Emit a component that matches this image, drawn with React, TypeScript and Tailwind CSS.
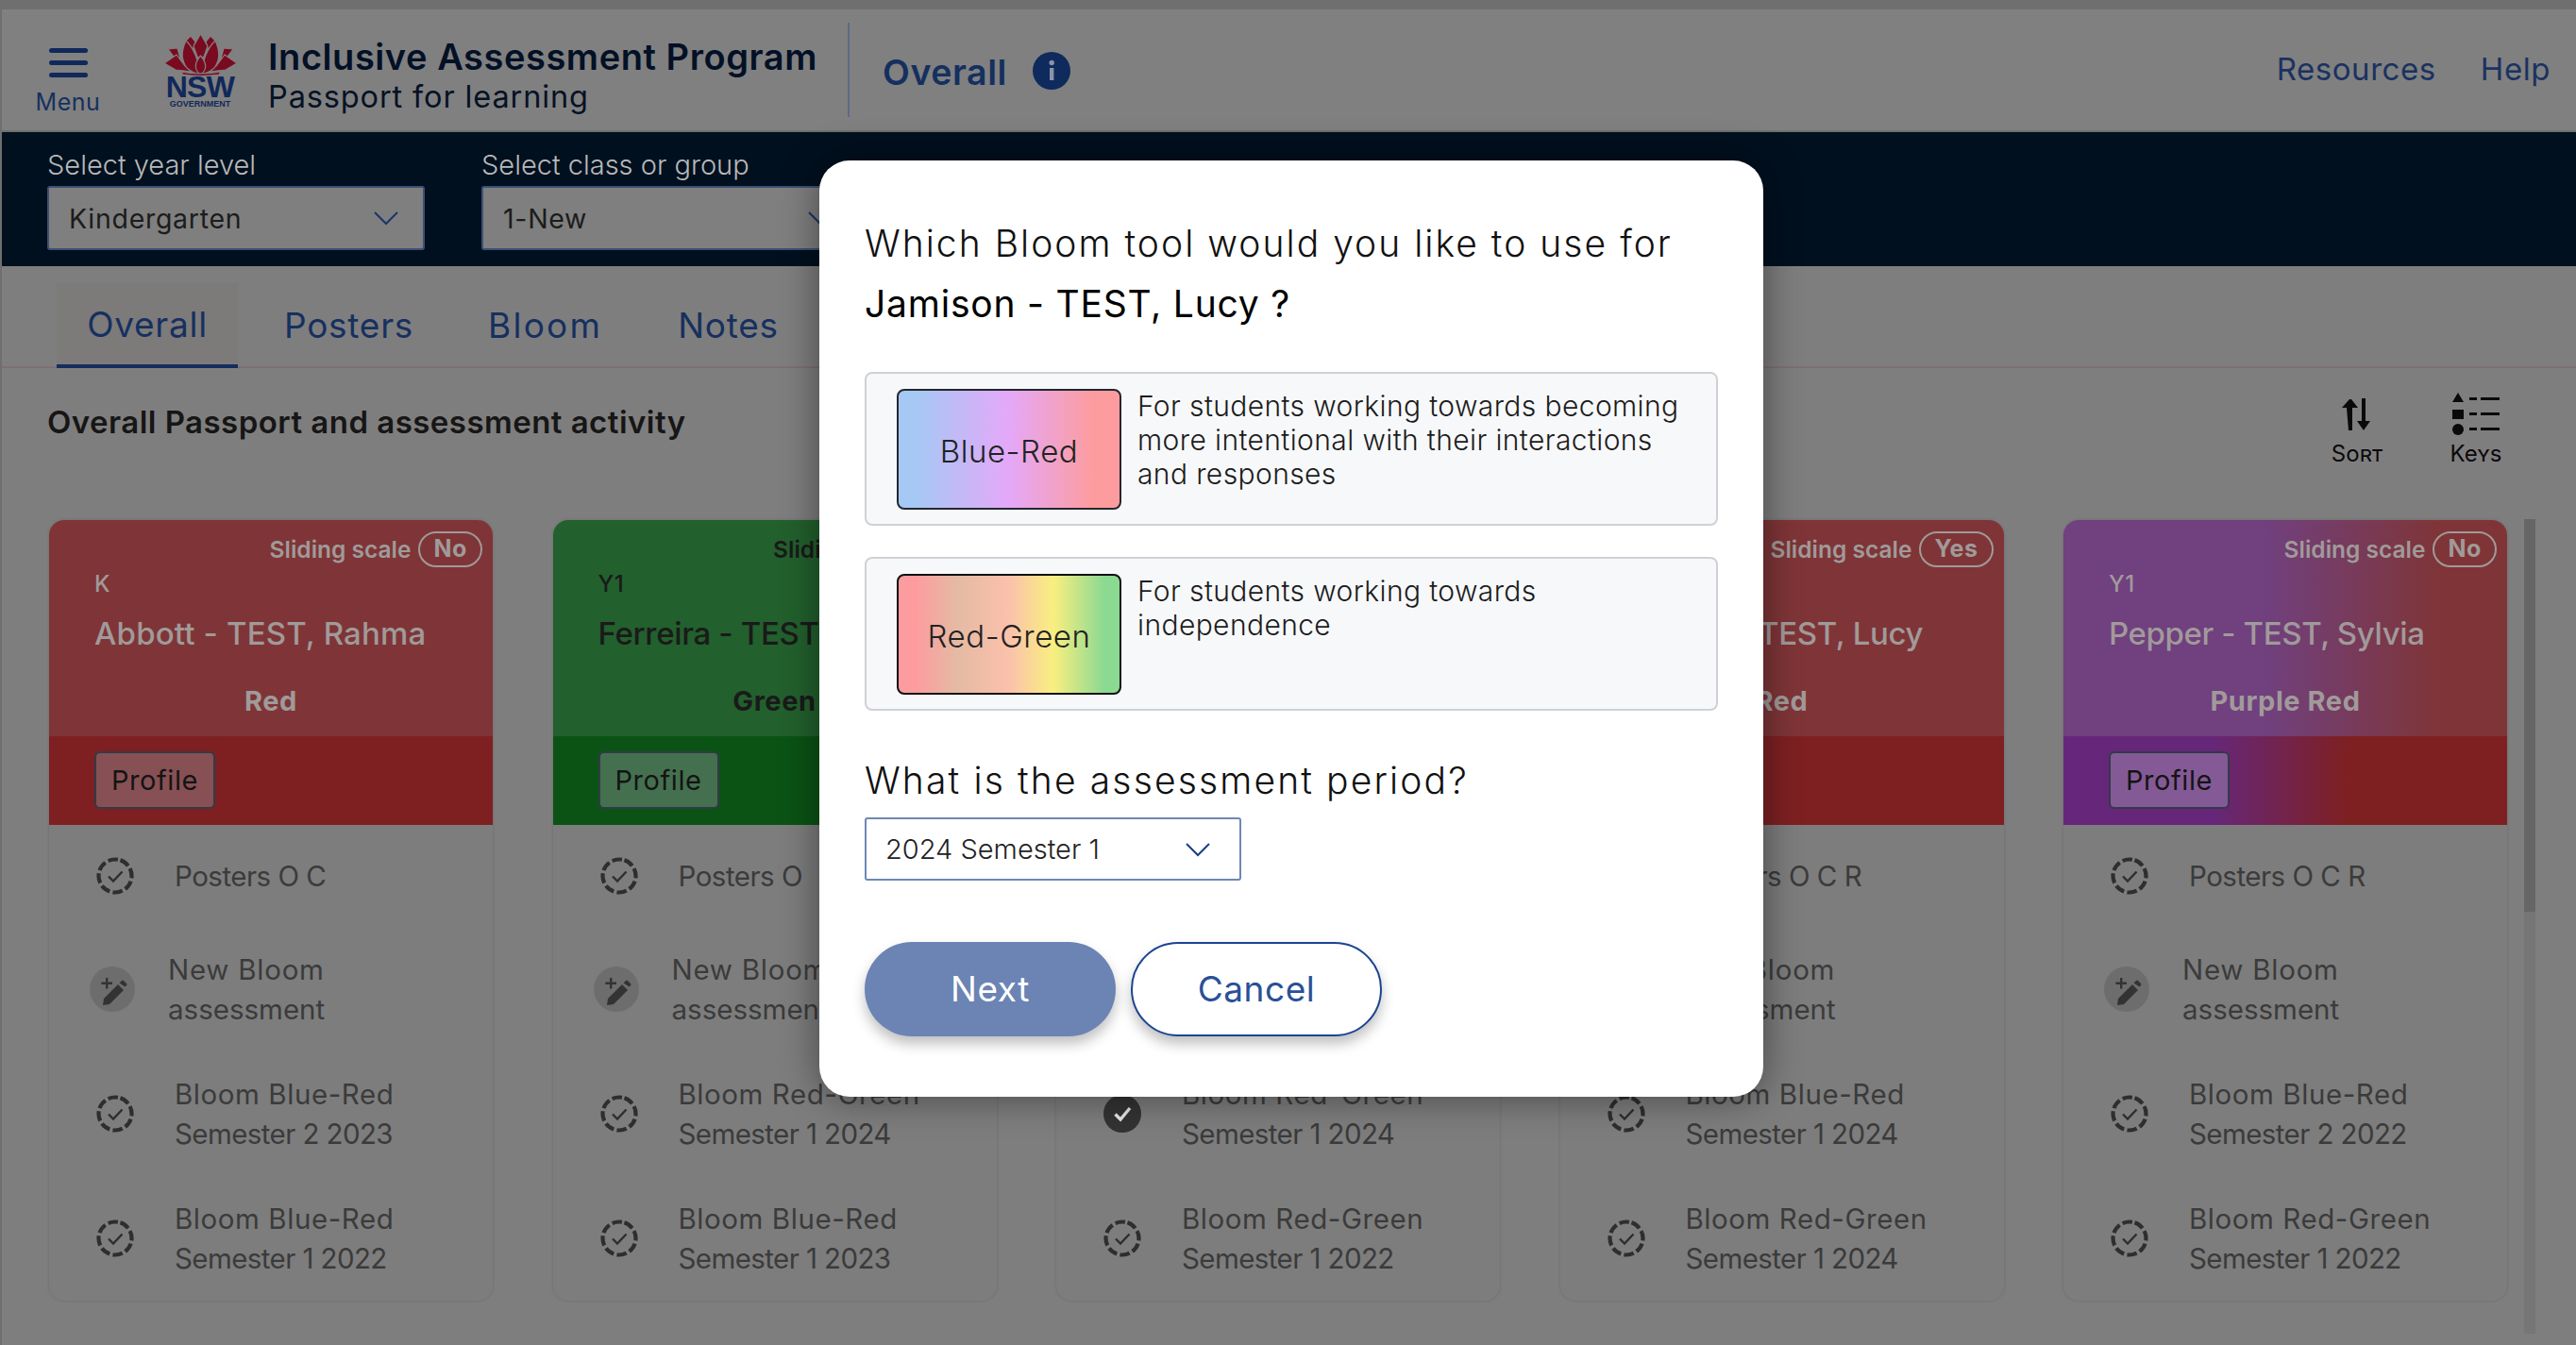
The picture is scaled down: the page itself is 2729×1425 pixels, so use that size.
import React from "react";

const Chevron = ({ className }: { className: string }) => (
  <svg viewBox="0 0 28 16" className={className} fill="none" stroke="currentColor" strokeWidth="2">
    <path d="M2 2 L14 14 L26 2" />
  </svg>
);

const DashedCheck = () => (
  <svg viewBox="0 0 40 40" className="w-[40px] h-[40px] shrink-0" fill="none" stroke="#2e2e2e" >
    <circle cx="20" cy="20" r="17.5" strokeWidth="4.2" strokeDasharray="10.35 3.4" transform="rotate(-72 20 20)" />
    <path d="M13 20.5 L18 25.5 L27.5 15.5" strokeWidth="2.4" />
  </svg>
);

const FilledCheck = () => (
  <svg viewBox="0 0 40 40" className="w-[40px] h-[40px] shrink-0">
    <circle cx="20" cy="20" r="20" fill="#333" />
    <path d="M12.5 20.5 L18 26 L28 14" fill="none" stroke="#e5e5e5" strokeWidth="3.4" />
  </svg>
);

const Wand = () => (
  <div className="w-[48px] h-[48px] rounded-full bg-[#6d6d6d] flex items-center justify-center shrink-0">
    <svg viewBox="0 0 48 48" className="w-[48px] h-[48px]" fill="#333">
      <path d="M14 41 L15 34 L30 19 L36 25 L21 40 Z" />
      <path d="M31.5 17.5 L34 15 Q35 14 36 15 L39 18 Q40 19 39 20 L37.5 21.5 Z" />
      <path d="M17 12 h2.4 v4.6 h4.6 v2.4 h-4.6 v4.6 h-2.4 v-4.6 h-4.6 v-2.4 h4.6 Z" />
    </svg>
  </div>
);

type Tone = "red" | "green" | "purple";
type CardData = {
  level: string;
  name: string;
  nameTrack: string;
  tone: Tone;
  band: string;
  slide: string;
  posters: string;
  rows: { a: string; b: string; filled?: boolean }[];
};

const cards: CardData[] = [
  { level: "K", name: "Abbott - TEST, Rahma", nameTrack: "tracking-[0.005em]", tone: "red", band: "Red", slide: "No", posters: "Posters O C",
    rows: [{ a: "Bloom Blue-Red", b: "Semester 2 2023" }, { a: "Bloom Blue-Red", b: "Semester 1 2022" }] },
  { level: "Y1", name: "Ferreira - TEST", nameTrack: "tracking-[-0.01em]", tone: "green", band: "Green", slide: "No", posters: "Posters O",
    rows: [{ a: "Bloom Red-Green", b: "Semester 1 2024" }, { a: "Bloom Blue-Red", b: "Semester 1 2023" }] },
  { level: "", name: "", nameTrack: "tracking-normal", tone: "red", band: "", slide: "No", posters: "",
    rows: [{ a: "Bloom Red-Green", b: "Semester 1 2024", filled: true }, { a: "Bloom Red-Green", b: "Semester 1 2022" }] },
  { level: "Y1", name: "Jamison - TEST, Lucy", nameTrack: "tracking-[-0.01em]", tone: "red", band: "Red", slide: "Yes", posters: "Posters O C R",
    rows: [{ a: "Bloom Blue-Red", b: "Semester 1 2024" }, { a: "Bloom Red-Green", b: "Semester 1 2024" }] },
  { level: "Y1", name: "Pepper - TEST, Sylvia", nameTrack: "tracking-[-0.012em]", tone: "purple", band: "Purple Red", slide: "No", posters: "Posters O C R",
    rows: [{ a: "Bloom Blue-Red", b: "Semester 2 2022" }, { a: "Bloom Red-Green", b: "Semester 1 2022" }] },
];

const toneTop: Record<Tone, string> = {
  red: "bg-[#7f3537] text-[#a09a9a]",
  green: "bg-[#22602d] text-[#1a1a1a]",
  purple: "bg-[linear-gradient(90deg,#70407f_0%,#70407f_45%,#7f3537_85%,#7f3537_100%)] text-[#a09a9a]",
};
const toneBand: Record<Tone, string> = {
  red: "bg-[#7e2022]",
  green: "bg-[#0a5315]",
  purple: "bg-[linear-gradient(90deg,#66277b_0%,#66277b_33%,#7e2022_64%,#7e2022_100%)]",
};
const toneBtn: Record<Tone, string> = {
  red: "bg-[#875055]",
  green: "bg-[#44704f]",
  purple: "bg-[#845a96]",
};

const Card = ({ c }: { c: CardData }) => (
  <div className="w-[470px] h-[827px] rounded-[16px] bg-[#7d7d7d] shadow-[0_0_3px_#6a6a6a] overflow-hidden shrink-0">
    <div className={`h-[229px] pt-[12px] flex flex-col ${toneTop[c.tone]}`}>
      <div className="flex justify-end items-center gap-[8px] pr-[11px] h-[38px]">
        <span className="text-[24.5px] font-semibold tracking-normal">Sliding scale</span>
        <span className="h-[38px] px-[14px] rounded-full border-2 border-current text-[25px] font-bold flex items-center">{c.slide}</span>
      </div>
      <div className="pl-[48px] pt-[2px] h-[32px] leading-[32px] text-[24px] font-medium">{c.level}</div>
      <div className={`pl-[48px] mt-[16px] h-[44px] leading-[44px] text-[33px] font-medium whitespace-nowrap ${c.nameTrack}`}>{c.name}</div>
      <div className="mt-[30px] h-[40px] leading-[40px] text-[29px] font-bold text-center">{c.band}</div>
    </div>
    <div className={`h-[94px] pt-[16px] pl-[48px] ${toneBand[c.tone]}`}>
      <div className={`w-[128px] h-[61px] rounded-[6px] border-2 border-[#333a48] flex items-center justify-center text-[29px] text-[#141414] ${toneBtn[c.tone]}`}>Profile</div>
    </div>
    <div className="text-[29.5px] leading-[42px] text-[#3b3b3b]">
      <div className="h-[108px] flex items-center pl-[50px]">
        <DashedCheck />
        <span className="ml-[43px] tracking-[-0.017em]">{c.posters}</span>
      </div>
      <div className="h-[132px] flex items-center pl-[43px]">
        <Wand />
        <span className="ml-[35px] tracking-[0.025em]">New Bloom<br /><span className="tracking-[0em]">assessment</span></span>
      </div>
      {c.rows.map((r, i) => (
        <div key={i} className="h-[132px] flex items-center pl-[50px]">
          {r.filled ? <FilledCheck /> : <DashedCheck />}
          <span className="ml-[43px]">{r.a}<br /><span className="tracking-[-0.02em]">{r.b}</span></span>
        </div>
      ))}
    </div>
  </div>
);

const Logo = () => (
  <div className="w-[78px] flex flex-col items-center shrink-0 pt-[3px]">
    <svg viewBox="0 0 77 44" className="w-[77px] h-[44px]" fill="#7a0a20" stroke="#808080" strokeWidth="1.2" strokeLinejoin="round">
      <path d="M28 2 L33 8 L30 18 L22 8 Z" />
      <path d="M49 2 L44 8 L47 18 L55 8 Z" />
      <path d="M38.5 0 L46 13 L42 24 L38.5 26 L35 24 L31 13 Z" />
      <path d="M4 16 L14 15 L17 26 L10 24 Z" />
      <path d="M73 16 L63 15 L60 26 L67 24 Z" />
      <path d="M0 31 L13 22 L22 34 L30 40 L12 38 Z" />
      <path d="M77 31 L64 22 L55 34 L47 40 L65 38 Z" />
      <path d="M23 7 Q15 24 24 36 Q31 42 37 42 Q36 20 23 7 Z" />
      <path d="M54 7 Q62 24 53 36 Q46 42 40 42 Q41 20 54 7 Z" />
      <path d="M38.5 23 Q29 34 37 42 L40 42 Q48 34 38.5 23 Z" />
      <path d="M17 40 Q38.5 44 60 40 L58 43 Q38.5 46 20 43 Z" />
    </svg>
    <div className="font-['Liberation_Sans',sans-serif] font-bold text-[32px] leading-[23px] tracking-[-0.02em] text-[#10295a] mt-[1px]">NSW</div>
    <div className="font-['Liberation_Sans',sans-serif] font-bold text-[9px] leading-[10px] tracking-normal text-[#10295a] mt-[1px] whitespace-nowrap">GOVERNMENT</div>
  </div>
);

const Select = ({ label, value }: { label: string; value: string }) => (
  <div className="w-[400px]">
    <div className="text-[29px] leading-[36px] h-[36px] font-light tracking-normal text-[#b9b9b9] whitespace-nowrap">{label}</div>
    <div className="mt-[4px] h-[68px] border-2 border-[#3d5075] rounded-[3px] bg-[#7f7f7f] flex items-center justify-between pl-[21px] pr-[25px]">
      <span className="text-[28.5px] pt-[2px] text-[#1c1c1c] tracking-[0.025em]">{value}</span>
      <Chevron className="w-[28px] h-[16px] text-[#1c3468]" />
    </div>
  </div>
);

export default function App() {
  return (
    <div className="relative h-screen w-full overflow-hidden bg-[#6f6f6f] pt-[10px] font-[Inter,sans-serif] tracking-[0.035em]">
      <div className="ml-[2px] h-[1415px] bg-[#7f7e7e]">
        {/* top header */}
        <header className="h-[130px] bg-[#808080] border-b-2 border-[#6f6f6f] flex items-center">
          <div className="w-[140px] shrink-0 flex flex-col items-center pt-[26px] text-[#16305f]">
            <div className="w-[41px] flex flex-col gap-[8px]">
              <div className="h-[5px] rounded bg-[#10295a]" />
              <div className="h-[5px] rounded bg-[#10295a]" />
              <div className="h-[5px] rounded bg-[#10295a]" />
            </div>
            <div className="text-[25px] leading-[30px] mt-[11px]">Menu</div>
          </div>
          <div className="ml-[31px]"><Logo /></div>
          <div className="ml-[33px] w-[614px] shrink-0 pt-[14px]">
            <div className="text-[38px] leading-[44px] font-semibold text-[#031026] whitespace-nowrap">Inclusive Assessment Program</div>
            <div className="text-[32.5px] leading-[42px] tracking-[0.027em] text-[#061224] whitespace-nowrap">Passport for learning</div>
          </div>
          <div className="w-[2px] h-[100px] bg-[#5c6a85] shrink-0" />
          <div className="ml-[35px] pt-[6px] text-[37.5px] font-semibold text-[#14305f]">Overall</div>
          <svg viewBox="0 0 40 40" className="ml-[27px] mt-[1px] w-[40px] h-[40px] shrink-0">
            <circle cx="20" cy="20" r="20" fill="#0f2a5c" />
            <rect x="18" y="17" width="4.4" height="13" fill="#8a93a8" />
            <circle cx="20.2" cy="11.5" r="2.7" fill="#8a93a8" />
          </svg>
          <nav className="ml-auto mr-[27px] flex gap-[47px] text-[33px] text-[#1a3261]">
            <span>Resources</span>
            <span>Help</span>
          </nav>
        </header>

        {/* filter bar */}
        <div className="h-[142px] bg-[#00101f] pl-[48px] pt-[17px] flex gap-[60px]">
          <Select label="Select year level" value="Kindergarten" />
          <Select label="Select class or group" value="1-New" />
        </div>

        {/* tabs */}
        <div className="mt-px h-[107px] border-b-2 border-[#7b7074] pt-[17px] pl-[58px] flex text-[37px] tracking-[0.02em] text-[#16305f]">
          <div className="w-[192px] h-[90px] pt-[2px] bg-[#7d7a7a] border-b-4 border-[#152d5c] flex items-center justify-center">Overall</div>
          <div className="ml-[49px] h-[90px] flex items-center">Posters</div>
          <div className="ml-[79px] h-[90px] flex items-center tracking-[0.06em]">Bloom</div>
          <div className="ml-[80px] h-[90px] flex items-center">Notes</div>
        </div>

        {/* title row */}
        <div className="h-[161px] flex pl-[48px] pr-[71px]">
          <h1 className="mt-[35px] text-[33px] leading-[44px] font-semibold tracking-[0.014em] text-[#161616] whitespace-nowrap">Overall Passport and assessment activity</h1>
          <div className="ml-auto flex gap-[56px] text-[#0a0a0a]">
            <div className="w-[70px] flex flex-col items-center pt-[32px]">
              <svg viewBox="0 0 32 34" className="w-[32px] h-[34px]" fill="#0a0a0a">
                <path d="M5 9 L0 9 L8 0 L10 0 L17 9 L11 9 L11 33 L7 33 Z" transform="translate(0 1)" />
                <path d="M17 0 H21 V24 H26 L19 34 L12 24 H17 Z" transform="translate(4 0)" />
              </svg>
              <div className="mt-[10px] text-[24px] leading-[30px] [font-variant:small-caps] tracking-normal">Sort</div>
            </div>
            <div className="w-[70px] flex flex-col items-center pt-[26px]">
              <svg viewBox="0 0 52 46" className="w-[52px] h-[46px]" fill="#0a0a0a">
                <path d="M7 0 L13 10 H1 Z" />
                <rect x="1" y="18" width="12" height="10" />
                <ellipse cx="7" cy="39" rx="6" ry="6" />
                <rect x="19" y="5" width="8" height="3" /><rect x="31" y="5" width="20" height="3" />
                <rect x="19" y="21" width="8" height="3" /><rect x="31" y="21" width="20" height="3" />
                <rect x="19" y="37" width="8" height="3" /><rect x="31" y="37" width="20" height="3" />
              </svg>
              <div className="mt-[4px] text-[24px] leading-[30px] [font-variant:small-caps] tracking-normal">Keys</div>
            </div>
          </div>
        </div>

        {/* cards */}
        <div className="flex pl-[50px]">
          <div className="w-[2604px] flex justify-between shrink-0">
            {cards.map((c, i) => <Card key={i} c={c} />)}
          </div>
          <div className="ml-[18px] w-[12px] h-[863px] bg-[#767676] -mt-[1px] shrink-0">
            <div className="h-[416px] bg-[#666]" />
          </div>
        </div>
      </div>

      {/* modal */}
      <div className="absolute left-[868px] top-[170px] w-[1000px] h-[992px] rounded-[32px] bg-white shadow-[0_0_40px_rgba(0,0,0,0.45)] pt-[56px] pl-[48px] pr-[48px] text-black">
        <div className="text-[39px] leading-[64px] tracking-[0.052em] font-light text-[#111] whitespace-nowrap">Which Bloom tool would you like to use for</div>
        <div className="text-[39px] leading-[64px] tracking-[0.02em] font-normal">Jamison - TEST, Lucy ?</div>

        <div className="mt-[40px] h-[163px] rounded-[8px] border-2 border-[#cfd1d5] bg-[#f7f8fa] pt-[16px] pl-[32px] flex">
          <div className="w-[238px] h-[128px] pt-[5px] rounded-[8px] border-2 border-[#24272f] bg-[linear-gradient(90deg,#a6c8f5_8%,#e4a8f8_50%,#fd9c9f_88%)] flex items-center justify-center text-[33px] font-light text-[#222]">Blue-Red</div>
          <div className="ml-[17px] text-[30px] leading-[36px] tracking-[0.013em] font-light text-[#1c1c1c]">For students working towards becoming<br />more intentional with their interactions<br />and responses</div>
        </div>
        <div className="mt-[33px] h-[163px] rounded-[8px] border-2 border-[#cfd1d5] bg-[#f7f8fa] pt-[16px] pl-[32px] flex">
          <div className="w-[238px] h-[128px] pt-[5px] rounded-[8px] border-2 border-[#111] bg-[linear-gradient(90deg,#fd9c9f_8%,#e4baa3_26%,#fbc1ab_50%,#f9ef80_70%,#8cd992_93%)] flex items-center justify-center text-[33px] font-light text-[#222]">Red-Green</div>
          <div className="ml-[17px] text-[30px] leading-[36px] tracking-[0.013em] font-light text-[#1c1c1c]">For students working towards<br />independence</div>
        </div>

        <div className="mt-[50px] text-[39px] leading-[48px] tracking-[0.055em] font-light text-[#111]">What is the assessment period?</div>
        <div className="mt-[15px] w-[399px] h-[67px] rounded-[3px] border-2 border-[#6f87b5] flex items-center justify-between pl-[20px] pr-[30px]">
          <span className="text-[29px] font-light text-[#222] tracking-normal">2024 Semester 1</span>
          <Chevron className="w-[28px] h-[16px] text-[#1c3f86]" />
        </div>

        <div className="mt-[65px] flex gap-[16px]">
          <div className="w-[266px] h-[100px] rounded-full bg-[#6b84b4] shadow-[0_8px_14px_rgba(0,0,0,0.25)] flex items-center justify-center text-[37px] text-white">Next</div>
          <div className="w-[266px] h-[100px] rounded-full border-2 border-[#1d4491] bg-white shadow-[0_8px_14px_rgba(0,0,0,0.25)] flex items-center justify-center text-[37px] text-[#2a5097]">Cancel</div>
        </div>
      </div>
    </div>
  );
}
